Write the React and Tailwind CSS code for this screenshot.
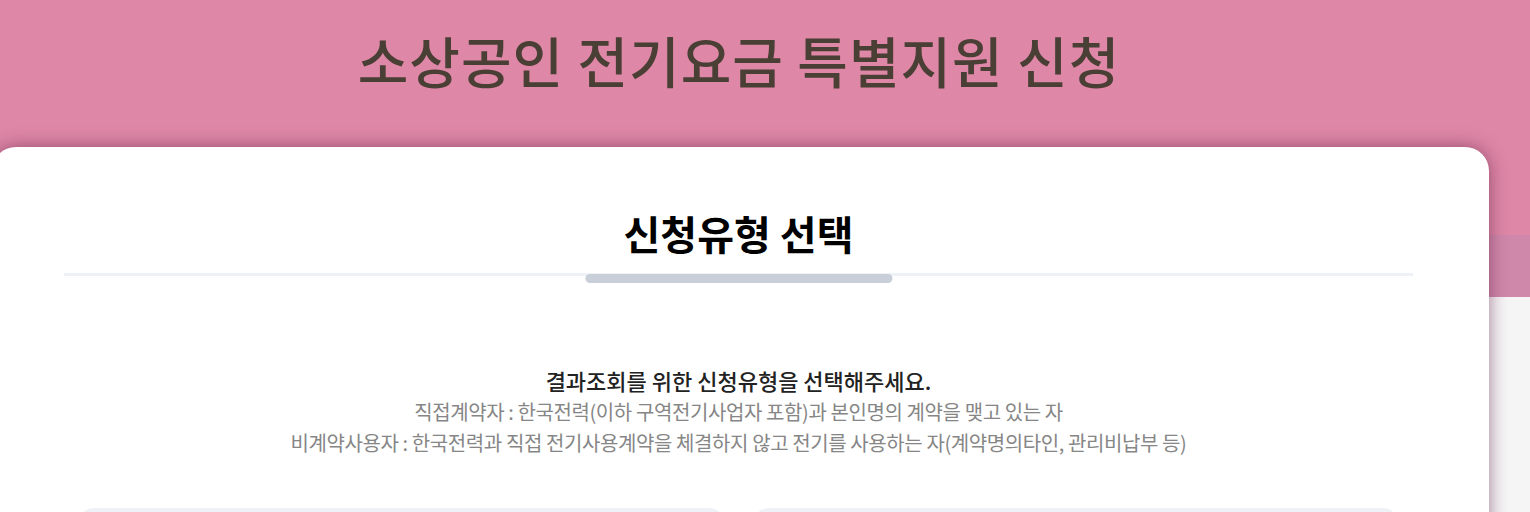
import React from "react";

const infoLines = [
  "직접계약자 : 한국전력(이하 구역전기사업자 포함)과 본인명의 계약을 맺고 있는 자",
  "비계약사용자 : 한국전력과 직접 전기사용계약을 체결하지 않고 전기를 사용하는 자(계약명의타인, 관리비납부 등)",
];

export default function App() {
  return (
    <div
      className="min-h-screen overflow-hidden bg-[linear-gradient(#de87a6_0px,#de87a6_235px,#cf88aa_235px,#cf88aa_297px,#f5f5f5_297px)]"
      style={{ fontFamily: '"Noto Sans CJK KR", "Noto Sans", sans-serif' }}
    >
      <header className="h-[147px] pt-[19px] pr-[52px]">
        <h1 className="text-center text-[55px] font-medium leading-[80px] tracking-[1px] text-[#4a3f35]">
          소상공인 전기요금 특별지원 신청
        </h1>
      </header>

      <main className="-ml-[8px] w-[1497px] rounded-t-[24px] bg-white pb-10 shadow-[0_0_18px_rgba(100,35,75,0.6)]">
        <div className="pl-[72px] pr-[76px] pt-[56px]">
          <h2 className="text-center text-[40px] font-bold leading-[60px] text-black">
            신청유형 선택
          </h2>
          <div className="relative mt-[10px] h-[3px] bg-[#eef1f6]">
            <div className="absolute left-1/2 top-[1px] h-[9px] w-[307px] -translate-x-1/2 rounded-full bg-[#c8cfd9]" />
          </div>

          <div className="mt-[88px] text-center">
            <p className="text-[22px] font-medium leading-[32px] text-[#222]">
              결과조회를 위한 신청유형을 선택해주세요.
            </p>
            {infoLines.map((line) => (
              <p key={line} className="text-[20px] leading-[31px] tracking-[-0.4px] text-[#868686]">
                {line}
              </p>
            ))}
          </div>

          <div className="mt-[50px] grid grid-cols-2 gap-[28px] px-[14px]">
            <div className="h-[160px] rounded-[16px] bg-[#eef2f7]" />
            <div className="h-[160px] rounded-[16px] bg-[#eef2f7]" />
          </div>
        </div>
      </main>
    </div>
  );
}
